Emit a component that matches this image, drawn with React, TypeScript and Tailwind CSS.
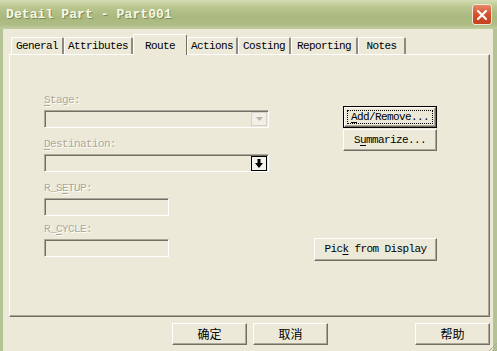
import React from 'react'

const tabs = [
  { label: 'General', w: 53 },
  { label: 'Attributes', w: 69 },
  { label: 'Route', w: 54, active: true },
  { label: 'Actions', w: 51 },
  { label: 'Costing', w: 53 },
  { label: 'Reporting', w: 67 },
  { label: 'Notes', w: 48 },
]

const etched = 'text-[#aca899] [text-shadow:1px_1px_0_#ffffff]'
const sunken =
  'border border-t-[#aca899] border-l-[#aca899] border-b-white border-r-white shadow-[inset_1px_1px_0_#716f64]'
const raised =
  'border border-t-white border-l-white border-b-[#716f64] border-r-[#716f64] shadow-[inset_-1px_-1px_0_#aca899] bg-[#ece9d8]'

function TitleBar() {
  return (
    <div className="h-[29px] flex items-center justify-between pl-[6px] pr-[5px] bg-[linear-gradient(180deg,#d3dcb3_0%,#b9c68f_25%,#a9b87d_60%,#aebd85_85%,#c2cda0_100%)]">
      <span className="text-[13px] font-bold text-[#f7f7e6] tracking-[0.1px] [text-shadow:1px_1px_0_#7d8b58] leading-none">
        Detail Part - Part001
      </span>
      <div className="w-[20px] h-[21px] rounded-[3px] border border-[#f3e7d8] bg-[linear-gradient(180deg,#e88a6c_0%,#d5532f_45%,#c4401f_100%)] flex items-center justify-center">
        <svg width="12" height="12" viewBox="0 0 12 12">
          <path d="M2 2 L10 10 M10 2 L2 10" stroke="#ffffff" strokeWidth="2.2" strokeLinecap="round" />
        </svg>
      </div>
    </div>
  )
}

function Label({ children }: { children: React.ReactNode }) {
  return <div className={`h-[12px] leading-[12px] text-[11px] tracking-[-0.6px] ${etched}`}>{children}</div>
}

function Btn({
  children,
  w,
  h = 22,
  focus,
  cjk,
}: {
  children: React.ReactNode
  w: number
  h?: number
  focus?: boolean
  cjk?: boolean
}) {
  const text = cjk
    ? "font-['Noto_Sans_CJK_SC',sans-serif] text-[12px]"
    : 'text-[11px] tracking-[-0.6px]'
  if (focus) {
    return (
      <div className="border border-black" style={{ width: w, height: h }}>
        <div className={`h-full w-full ${raised} flex items-center justify-center p-[2px]`}>
          <div className={`h-full w-full border border-dotted border-black flex items-center justify-center text-black ${text}`}>
            {children}
          </div>
        </div>
      </div>
    )
  }
  return (
    <div
      className={`${raised} flex items-center justify-center text-black ${text}`}
      style={{ width: w, height: h }}
    >
      {children}
    </div>
  )
}

export default function App() {
  return (
    <div className="relative w-[497px] h-[351px] overflow-hidden flex flex-col bg-[#ece9d8] font-['Liberation_Mono',monospace]">
      <TitleBar />
      <div className="flex-1 flex flex-col border-l-[3px] border-r-[4px] border-[#b5c394]">
        {/* tabs */}
        <div className="mt-[5px] ml-[8px] h-[20px] flex items-end">
          {tabs.map((t) =>
            t.active ? (
              <div
                key={t.label}
                className="relative z-10 -mb-px h-[21px] bg-[#ece9d8] border-t border-l border-white border-r border-r-[#716f64] rounded-t-[2px] flex items-start justify-center pt-[3px] text-[11px] tracking-[-0.6px] text-black"
                style={{ width: t.w }}
              >
                {t.label}
              </div>
            ) : (
              <div
                key={t.label}
                className="h-[17px] pt-[1px] border-t border-l border-white border-r-2 border-r-[#8d8b80] rounded-t-[2px] flex items-center justify-center text-[11px] tracking-[-0.6px] text-black"
                style={{ width: t.w }}
              >
                {t.label}
              </div>
            )
          )}
        </div>

        {/* panel */}
        <div className="ml-[6px] mr-[3px] h-[263px] flex border-t border-l border-white border-r border-b border-r-[#716f64] border-b-[#716f64] shadow-[inset_-1px_-1px_0_#aca899]">
          <div className="w-[260px] pl-[34px] pt-[39px] flex flex-col">
            <Label>
              <u className="underline-offset-2">S</u>tage:
            </Label>
            <div className={`mt-[4px] h-[18px] w-[225px] ${sunken} flex justify-end items-center pr-[1px]`}>
              <div className="w-[16px] h-[14px] border border-[#d6d3c6] bg-[#f1efe6] flex items-center justify-center">
                <svg width="7" height="4" viewBox="0 0 7 4">
                  <path d="M0 0 L7 0 L3.5 4 Z" fill="#b8b5a8" />
                </svg>
              </div>
            </div>
            <div className="mt-[10px]">
              <Label>
                <u className="underline-offset-2">D</u>estination:
              </Label>
            </div>
            <div className={`mt-[4px] h-[18px] w-[225px] ${sunken} flex justify-end items-center pr-[1px]`}>
              <div className="w-[16px] h-[15px] border border-black bg-[#f4f3ee] flex items-center justify-center">
                <svg width="8" height="9" viewBox="0 0 8 9">
                  <path d="M2.5 0 H5.5 V4 H8 L4 9 L0 4 H2.5 Z" fill="#000000" />
                </svg>
              </div>
            </div>
            <div className="mt-[10px]">
              <Label>
                R_S<u className="underline-offset-2">E</u>TUP:
              </Label>
            </div>
            <div className={`mt-[4px] h-[18px] w-[125px] ${sunken}`} />
            <div className="mt-[7px]">
              <Label>
                R_<u className="underline-offset-2">C</u>YCLE:
              </Label>
            </div>
            <div className={`mt-[4px] h-[18px] w-[125px] ${sunken}`} />
          </div>

          <div className="flex-1 flex flex-col items-end pr-[52px] pt-[51px]">
            <Btn w={94} focus>
              <span>
                <u className="underline-offset-2">A</u>dd/Remove...
              </span>
            </Btn>
            <div className="mt-[1px]">
              <Btn w={94}>
                <span>
                  S<u className="underline-offset-2">u</u>mmarize...
                </span>
              </Btn>
            </div>
            <div className="mt-[87px]">
              <Btn w={123} h={23}>
                <span>
                  Pic<u className="underline-offset-2">k</u> from Display
                </span>
              </Btn>
            </div>
          </div>
        </div>

        {/* bottom buttons */}
        <div className="mt-[6px] flex items-start pl-[169px] pr-[3px]">
          <Btn w={75} cjk>
            确定
          </Btn>
          <div className="ml-[6px]">
            <Btn w={75} cjk>
              取消
            </Btn>
          </div>
          <div className="ml-auto">
            <Btn w={75} cjk>
              帮助
            </Btn>
          </div>
        </div>
      </div>
      <svg className="absolute right-0 bottom-0" width="10" height="10" viewBox="0 0 10 10">
        <path d="M10 2 L2 10 M10 5 L5 10 M10 8 L8 10" stroke="#a9b08f" strokeWidth="1" />
      </svg>
    </div>
  )
}
